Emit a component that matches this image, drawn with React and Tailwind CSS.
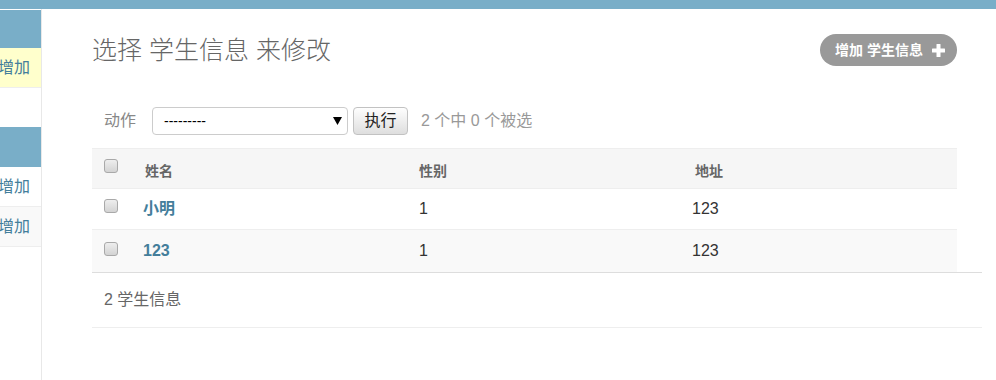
import React from 'react'

const font = { fontFamily: '"Liberation Sans", "Noto Sans CJK SC", sans-serif' }

function Checkbox({ className = '' }) {
  return (
    <span
      className={`block w-[14px] h-[14px] shrink-0 rounded-[3px] border border-[#a9a9a9] bg-gradient-to-b from-[#eeeeee] to-[#d3d3d3] ${className}`}
    />
  )
}

function SideRow({ bg = 'bg-white' }) {
  return (
    <div className={`h-[40px] flex items-center justify-end pr-[11px] border-b border-[#eee] ${bg}`}>
      <span className="text-[16px] text-[#447e9b] whitespace-nowrap">增加</span>
    </div>
  )
}

const rows = [
  { name: '小明', gender: '1', address: '123', bg: 'bg-white', box: 'mb-[6px]' },
  { name: '123', gender: '1', address: '123', bg: 'bg-[#f9f9f9]', box: 'mb-[4px]' },
]

export default function App() {
  return (
    <div className="w-[996px] h-[380px] overflow-hidden bg-white" style={font}>
      {/* top header strip */}
      <div className="h-[9px] bg-[#79aec8]" />

      <div className="flex h-[371px]">
        {/* sidebar, scrolled off to the left */}
        <div className="w-[42px] shrink-0 border-r border-[#e8e8e8] overflow-hidden pt-px">
          <div className="h-[38px] bg-[#79aec8]" />
          <SideRow bg="bg-[#ffffcc]" />
          <div className="h-[39px]" />
          <div className="h-[40px] bg-[#79aec8]" />
          <SideRow />
          <SideRow bg="bg-[#f9f9f9]" />
        </div>

        {/* content */}
        <div className="pl-[50px] pt-[25px]">
          <div className="w-[865px]">
            <div className="flex items-center justify-between h-[32px]">
              <h1 className="text-[25px] leading-[32px] font-light text-[#666] -mt-[1px]">选择 学生信息 来修改</h1>
              <a className="h-[32px] flex items-center gap-[9px] rounded-full bg-[#999] pl-[15px] pr-[12px] text-white text-[14px] font-semibold">
                增加 学生信息
                <svg width="13" height="13" viewBox="0 0 13 13">
                  <rect x="4.5" y="0" width="4" height="13" rx="0.5" fill="#fff" />
                  <rect x="0" y="4.5" width="13" height="4" rx="0.5" fill="#fff" />
                </svg>
              </a>
            </div>

            {/* actions */}
            <div className="mt-[41px] h-[28px] flex items-center pl-[12px]">
              <span className="text-[16px] text-[#888] mr-[16px]">动作</span>
              <div className="w-[196px] h-[28px] rounded-[4px] border border-[#ccc] bg-white flex items-center justify-between pl-[11px] pr-[5px]">
                <span className="text-[14px] text-black">---------</span>
                <svg width="9" height="8" viewBox="0 0 9 8">
                  <path d="M0 0 H9 L4.5 8 Z" fill="#000" />
                </svg>
              </div>
              <button className="ml-[5px] w-[55px] h-[28px] rounded-[4px] border border-[#c2c2c2] bg-gradient-to-b from-[#fefefe] to-[#dedede] text-[16px] text-[#222]">
                执行
              </button>
              <span className="ml-[13px] text-[16px] text-[#999]">2 个中 0 个被选</span>
            </div>

            {/* results table */}
            <div className="mt-[13px]">
              <div className="h-[41px] flex items-center bg-[#f6f6f6] border-y border-[#eee]">
                <div className="w-[41px] pl-[12px]">
                  <Checkbox className="mb-[5px]" />
                </div>
                <div className="w-[274px] pl-[12px] text-[14px] font-semibold text-[#666] mt-[5px]">姓名</div>
                <div className="w-[276px] pl-[12px] text-[14px] font-semibold text-[#666] mt-[5px]">性别</div>
                <div className="pl-[12px] text-[14px] font-semibold text-[#666] mt-[5px]">地址</div>
              </div>
              {rows.map((r, i) => (
                <div
                  key={i}
                  className={`flex items-center ${r.bg} ${i === 0 ? 'h-[41px] border-b border-[#eee]' : 'h-[42px]'}`}
                >
                  <div className="w-[41px] pl-[12px]">
                    <Checkbox className={r.box} />
                  </div>
                  <div className="w-[274px] pl-[10px] text-[16px] font-bold text-[#447e9b]">{r.name}</div>
                  <div className="w-[276px] pl-[12px] text-[16px] text-[#333]">{r.gender}</div>
                  <div className="pl-[9px] text-[16px] text-[#333]">{r.address}</div>
                </div>
              ))}
            </div>
          </div>

          {/* paginator */}
          <div className="w-[890px] h-[56px] border-t border-b border-t-[#ddd] border-b-[#eee] flex items-center pl-[12px]">
            <span className="text-[16px] text-[#666]">2 学生信息</span>
          </div>
        </div>
      </div>
    </div>
  )
}
